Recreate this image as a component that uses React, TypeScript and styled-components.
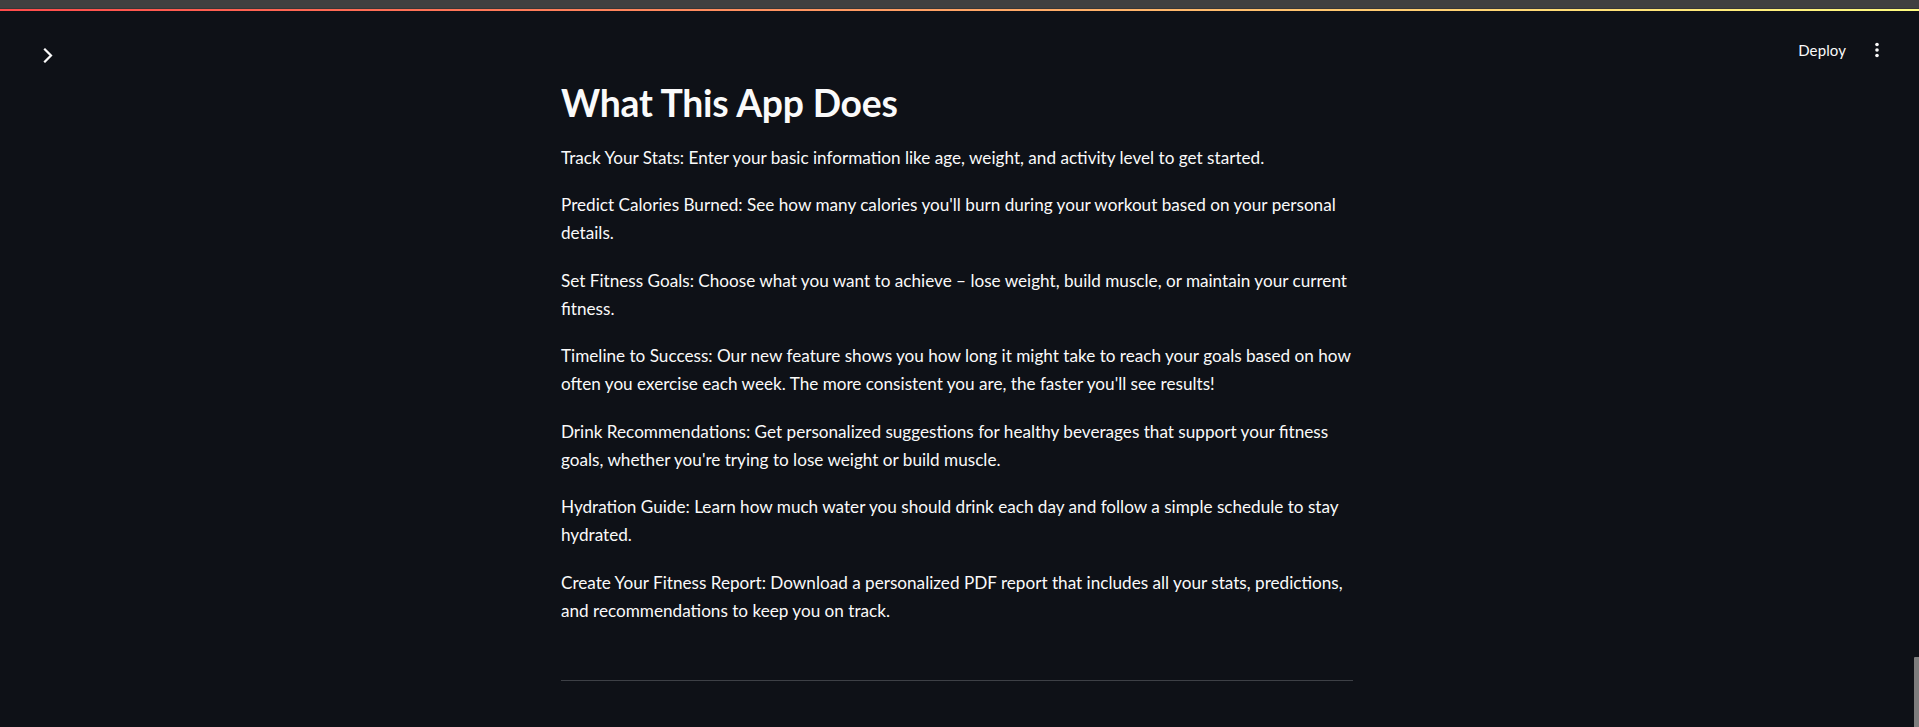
import styled, { createGlobalStyle } from "styled-components";

const GlobalStyle = createGlobalStyle`
  html, body {
    margin: 0;
    padding: 0;
    background: #0e1117;
    color: rgb(250, 250, 250);
    font-family: Lato, "Noto Sans", sans-serif;
    overflow: hidden;
  }
`;

const features: string[] = [
  "Track Your Stats: Enter your basic information like age, weight, and activity level to get started.",
  "Predict Calories Burned: See how many calories you'll burn during your workout based on your personal details.",
  "Set Fitness Goals: Choose what you want to achieve – lose weight, build muscle, or maintain your current fitness.",
  "Timeline to Success: Our new feature shows you how long it might take to reach your goals based on how often you exercise each week. The more consistent you are, the faster you'll see results!",
  "Drink Recommendations: Get personalized suggestions for healthy beverages that support your fitness goals, whether you're trying to lose weight or build muscle.",
  "Hydration Guide: Learn how much water you should drink each day and follow a simple schedule to stay hydrated.",
  "Create Your Fitness Report: Download a personalized PDF report that includes all your stats, predictions, and recommendations to keep you on track.",
];

const App: React.FC = () => {
  return (
    <>
      <GlobalStyle />
      <Page>
        <ChromeBar />
        <Decoration />
        <Header>
          <SidebarToggle aria-label="Open sidebar">
            <svg width="10" height="15" viewBox="0 0 10 15" fill="none">
              <path
                d="M2 1.5 L8 7.5 L2 13.5"
                stroke="#fafafa"
                strokeWidth="2.2"
                strokeLinecap="square"
              />
            </svg>
          </SidebarToggle>
          <Toolbar>
            <DeployButton>Deploy</DeployButton>
            <MenuButton aria-label="Main menu">
              <svg width="20" height="20" viewBox="0 0 20 20">
                <circle cx="10" cy="4.5" r="1.8" fill="#fafafa" />
                <circle cx="10" cy="10" r="1.8" fill="#fafafa" />
                <circle cx="10" cy="15.5" r="1.8" fill="#fafafa" />
              </svg>
            </MenuButton>
          </Toolbar>
        </Header>
        <Main>
          <Title>What This App Does</Title>
          <FeatureList>
            {features.map((f) => (
              <Feature key={f}>{f}</Feature>
            ))}
          </FeatureList>
          <Divider />
        </Main>
        <ScrollThumb />
      </Page>
    </>
  );
};

const Page = styled.div`
  min-height: 727px;
  background: #0e1117;
`;

const ChromeBar = styled.div`
  height: 8px;
  background: #404040;
  border-bottom: 1px solid #363636;
`;

const Decoration = styled.div`
  height: 2px;
  background: linear-gradient(90deg, #ff4b4b, #fffd80);
`;

const Header = styled.header`
  display: flex;
  justify-content: space-between;
  align-items: flex-start;
  height: 60px;
`;

const SidebarToggle = styled.div`
  margin: 37px 0 0 43px;
  width: 10px;
  height: 15px;
  display: flex;
`;

const Toolbar = styled.div`
  display: flex;
  align-items: center;
  gap: 21px;
  height: 30px;
  margin: 24px 32px 0 0;
`;

const DeployButton = styled.span`
  font-size: 15px;
  color: #fafafa;
  letter-spacing: 0.1px;
`;

const MenuButton = styled.div`
  width: 20px;
  height: 20px;
  display: flex;
`;

const Main = styled.main`
  max-width: 792px;
  margin: 0 auto;
  padding: 10px 5px 0 0;
`;

const Title = styled.h2`
  margin: 0 0 18px;
  font-size: 37.3px;
  line-height: 1.2;
  font-weight: 700;
  letter-spacing: -0.2px;
`;

const FeatureList = styled.div`
  display: flex;
  flex-direction: column;
  gap: 19.4px;
`;

const Feature = styled.p`
  margin: 0;
  font-size: 17.15px;
  line-height: 28.05px;
`;

const Divider = styled.hr`
  margin: 55.2px 0 0;
  border: none;
  border-top: 1px solid #3d4046;
`;

const ScrollThumb = styled.div`
  position: fixed;
  right: 0;
  top: 657px;
  bottom: 0;
  width: 5px;
  background: #7d7d7d;
  border-top-left-radius: 1px;
`;

export default App;
